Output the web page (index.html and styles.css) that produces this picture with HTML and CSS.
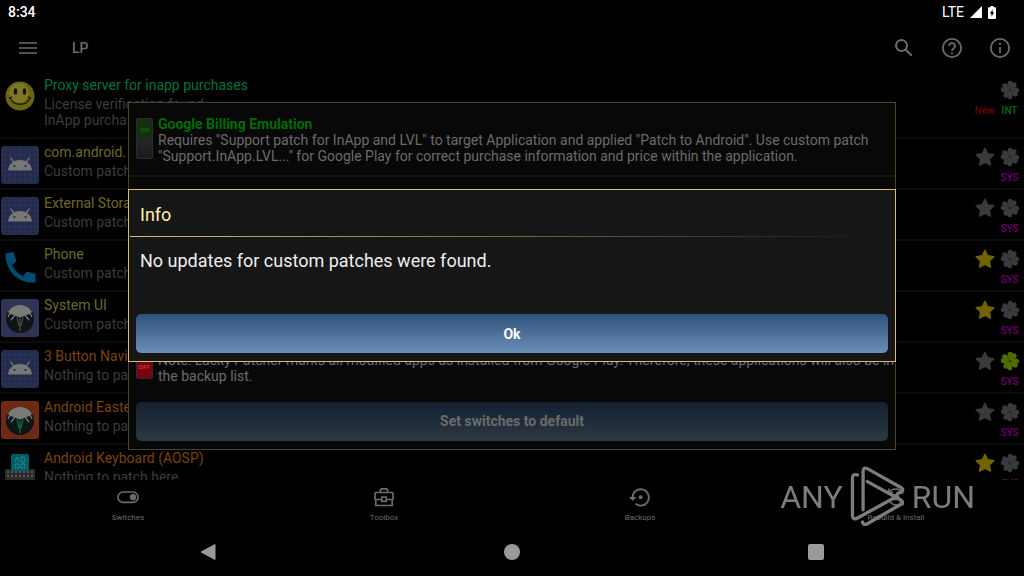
FILE: index.html
```
<!DOCTYPE html>
<html lang="en">
<head>
    <meta charset="UTF-8">
    <meta name="viewport" content="width=device-width, initial-scale=1.0">
    <title>LP</title>
    <link rel="stylesheet" href="styles.css">
</head>
<body>
    <!-- shared icons -->
    <svg class="defs" aria-hidden="true">
        <symbol id="star" viewBox="0 0 20 20">
            <path d="M10 1.2l2.7 5.6 6.1.9-4.4 4.3 1.1 6.2-5.5-2.9-5.5 2.9 1.1-6.2L1.2 7.7l6.1-.9z" stroke-width="1.4" stroke="currentColor" stroke-linejoin="round" fill="currentColor"/>
        </symbol>
        <symbol id="clover" viewBox="0 0 20 20">
            <g fill="currentColor" transform="rotate(20 10 10)">
                <path id="leaf" d="M10 9.700C8.300 8.200 5.200 6.800 5.400 3.500 5.600 1 8.700.2 10 2.300 11.300.2 14.400 1 14.600 3.500c.2 3.300-2.900 4.700-4.600 6.200z"/>
                <use href="#leaf" transform="rotate(90 10 10)"/>
                <use href="#leaf" transform="rotate(180 10 10)"/>
                <use href="#leaf" transform="rotate(270 10 10)"/>
            </g>
        </symbol>
        <symbol id="android" viewBox="0 0 38 38">
            <rect width="38" height="38" rx="3" fill="#222b4a"/>
            <path d="M4 0v38M9 0v38M14 0v38M19 0v38M24 0v38M29 0v38M34 0v38M0 4h38M0 9h38M0 14h38M0 19h38M0 24h38M0 29h38M0 34h38" stroke="#2c3556" stroke-width="1"/>
            <path d="M12.500 16L10 12M25.500 16l2.500-4" stroke="#777" stroke-width="1.4" fill="none" stroke-linecap="round"/>
            <path d="M7 24.5C7.600 18.500 12 14 19 14s11.400 4.500 12 10.500z" fill="#777"/>
            <circle cx="13.500" cy="20" r="1.1" fill="#222b4a"/>
            <circle cx="24.500" cy="20" r="1.1" fill="#222b4a"/>
        </symbol>
        <symbol id="umbrella" viewBox="0 0 38 38">
            <circle cx="19" cy="20" r="14" fill="#0d1517"/>
            <path d="M7 13C10 8 14 6 19 6s9 2 12 7c-2 2-4 3-6 3l-4 2h-4l-4-2c-2 0-4-1-6-3z" fill="#777b78"/>
            <path d="M9 14l-2 4M14 16l-4 5M29 14l2 4M24 16l4 5" stroke="#777b78" stroke-width="1.3"/>
            <path d="M19 18v14M16 18l2 9M22 18l-2 9" stroke="currentColor" stroke-width="1.4"/>
        </symbol>
    </svg>

    <div class="screen">
        <header class="status-bar">
            <span>8:34</span>
            <div class="status-icons">
                <span class="network">LTE</span>
                <svg width="12" height="12" viewBox="0 0 12 12"><path d="M12 0v12H0z" fill="#fff"/></svg>
                <svg width="8" height="13" viewBox="0 0 8 13"><path d="M2.500 0h3v1.300H7A1 1 0 0 1 8 2.300V12a1 1 0 0 1-1 1H1a1 1 0 0 1-1-1V2.300a1 1 0 0 1 1-1h1.500z" fill="#fff"/><path d="M4.600 3.200L2 7.700h1.500v3.100L6.100 6.300H4.600z" fill="#000"/></svg>
            </div>
        </header>

        <nav class="toolbar">
            <button class="icon-button" aria-label="Menu">
                <svg width="24" height="24" viewBox="0 0 24 24"><path d="M3 7h18M3 12h18M3 17h18" stroke="currentColor" stroke-width="1.7"/></svg>
            </button>
            <h1>LP</h1>
            <button class="icon-button" aria-label="Search">
                <svg width="24" height="24" viewBox="0 0 24 24" fill="none" stroke="currentColor" stroke-width="2"><circle cx="9.5" cy="9.5" r="5.5"/><path d="M13.800 13.800l6 6"/></svg>
            </button>
            <button class="icon-button" aria-label="Help">
                <svg width="24" height="24" viewBox="0 0 24 24" fill="none" stroke="currentColor" stroke-width="1.8"><circle cx="12" cy="12" r="9.1"/><path d="M9 10a3 3 0 1 1 4.800 2.300C12.600 13.200 12 13.700 12 15M12 16.200v2"/></svg>
            </button>
            <button class="icon-button" aria-label="Info">
                <svg width="24" height="24" viewBox="0 0 24 24" fill="none" stroke="currentColor" stroke-width="1.8"><circle cx="12" cy="12" r="9.1"/><path d="M12 11v6M12 7v2"/></svg>
            </button>
        </nav>

        <ul class="app-list">
            <li class="app">
                <svg class="app-icon" viewBox="0 0 38 38">
                    <circle cx="19" cy="17" r="14.5" fill="#6b6410"/>
                    <circle cx="18" cy="14" r="10" fill="#7d7722"/>
                    <ellipse cx="14.5" cy="12.5" rx="1.7" ry="3.3" fill="#111"/>
                    <ellipse cx="23.5" cy="12.5" rx="1.7" ry="3.3" fill="#111"/>
                    <path d="M9.500 18.500c1.500 9 17.500 9 19 0M8 19.500l3-1.500M30 19.500L27 18" stroke="#1c1a04" stroke-width="1.5" fill="none"/>
                </svg>
                <div class="app-text">
                    <h2 class="green">Proxy server for inapp purchases</h2>
                    <p>License verification found<br>InApp purchases found</p>
                </div>
                <div class="marks">
                    <span class="empty"></span>
                    <svg><use href="#clover"/></svg>
                    <span class="tag new">New</span>
                    <span class="tag int">INT</span>
                </div>
            </li>
            <li class="app">
                <svg class="app-icon"><use href="#android"/></svg>
                <div class="app-text">
                    <h2 class="yellow">com.android.</h2>
                    <p>Custom patch</p>
                </div>
                <div class="marks">
                    <svg><use href="#star"/></svg>
                    <svg><use href="#clover"/></svg>
                    <span class="tag sys">SYS</span>
                </div>
            </li>
            <li class="app">
                <svg class="app-icon"><use href="#android"/></svg>
                <div class="app-text">
                    <h2 class="yellow">External Storage</h2>
                    <p>Custom patch</p>
                </div>
                <div class="marks">
                    <svg><use href="#star"/></svg>
                    <svg><use href="#clover"/></svg>
                    <span class="tag sys">SYS</span>
                </div>
            </li>
            <li class="app">
                <svg class="app-icon" viewBox="0 0 38 38">
                    <path d="M4.500 5.500l8-1.500 3 9-4.500 4c2.500 5 6 8.500 11 11l4-4.500 8.500 2.500v8.500C18 36 4 23 4.500 5.500z" fill="#034b70"/>
                </svg>
                <div class="app-text">
                    <h2 class="yellow">Phone</h2>
                    <p>Custom patch</p>
                </div>
                <div class="marks">
                    <svg class="gold"><use href="#star"/></svg>
                    <svg><use href="#clover"/></svg>
                    <span class="tag sys">SYS</span>
                </div>
            </li>
            <li class="app">
                <svg class="app-icon gray-ribs" viewBox="0 0 38 38">
                    <rect width="38" height="38" rx="3" fill="#303354"/>
                    <use href="#umbrella"/>
                </svg>
                <div class="app-text">
                    <h2 class="yellow">System UI</h2>
                    <p>Custom patch</p>
                </div>
                <div class="marks">
                    <svg class="gold"><use href="#star"/></svg>
                    <svg><use href="#clover"/></svg>
                    <span class="tag sys">SYS</span>
                </div>
            </li>
            <li class="app">
                <svg class="app-icon"><use href="#android"/></svg>
                <div class="app-text">
                    <h2 class="orange">3 Button Navi</h2>
                    <p>Nothing to patch</p>
                </div>
                <div class="marks">
                    <svg><use href="#star"/></svg>
                    <svg class="lime"><use href="#clover"/></svg>
                    <span class="tag sys">SYS</span>
                </div>
            </li>
            <li class="app">
                <svg class="app-icon green-ribs" viewBox="0 0 38 38">
                    <rect width="38" height="38" rx="3" fill="#6e2a14"/>
                    <use href="#umbrella"/>
                </svg>
                <div class="app-text">
                    <h2 class="orange">Android Easter</h2>
                    <p>Nothing to patch</p>
                </div>
                <div class="marks">
                    <svg><use href="#star"/></svg>
                    <svg><use href="#clover"/></svg>
                    <span class="tag sys">SYS</span>
                </div>
            </li>
            <li class="app">
                <svg class="app-icon" viewBox="0 0 38 38">
                    <path d="M4 17h30v21H4z" fill="#2b2b2b"/>
                    <path d="M6 20h26M6 24h26" stroke="#565656" stroke-width="2" stroke-dasharray="2 2"/>
                    <rect x="10" y="2" width="18" height="17" rx="2" fill="#035c63"/>
                    <path d="M14 10l2-5 2 5M20 5h4v5h-4zM14 12h4v4h-4zM20 12h4v4h-4z" stroke="#23868a" fill="none"/>
                </svg>
                <div class="app-text">
                    <h2 class="orange">Android Keyboard (AOSP)</h2>
                    <p>Nothing to patch here</p>
                </div>
                <div class="marks">
                    <svg class="gold"><use href="#star"/></svg>
                    <svg><use href="#clover"/></svg>
                    <span class="tag sys">SYS</span>
                </div>
            </li>
        </ul>

        <nav class="tabs">
            <button class="tab">
                <svg width="24" height="24" viewBox="0 0 24 24" fill="none" stroke="currentColor" stroke-width="1.7"><rect x="2" y="7" width="20" height="10.4" rx="5.2"/><circle cx="17" cy="12.2" r="2.3" fill="currentColor"/></svg>
                Switches
            </button>
            <button class="tab">
                <svg width="24" height="24" viewBox="0 0 24 24" fill="none" stroke="currentColor" stroke-width="1.7"><path d="M8.500 7.500V4.800q0-1 1-1h5q1 0 1 1v2.700M3 15V8.500q0-1 1-1h16q1 0 1 1V15M3 14.500h6.500M14.500 14.500H21M3.800 14.500V20.500h16.400v-6M9.800 12h4.400v4.300H9.800z"/></svg>
                Toolbox
            </button>
            <button class="tab">
                <svg width="24" height="24" viewBox="0 0 24 24" fill="none" stroke="currentColor" stroke-width="1.8"><path d="M4.500 12.500a8.200 8.200 0 1 1 3 6.300"/><path d="M1 12l3.700 4 3.700-4z" fill="currentColor" stroke="none"/><circle cx="12.700" cy="12.2" r="2" fill="currentColor" stroke="none"/></svg>
                Backups
            </button>
            <button class="tab">
                <svg width="24" height="24" viewBox="0 0 24 24" fill="none" stroke="currentColor" stroke-width="1.7"><path d="M19 9a8 8 0 0 0-14-1.500M5 3.500v4h4M5 15a8 8 0 0 0 14 1.500M19 20.500v-4h-4"/><circle cx="12" cy="12" r="2.5"/></svg>
                Rebuild &amp; Install
            </button>
        </nav>

        <nav class="system-nav">
            <button aria-label="Back"><svg width="16" height="18" viewBox="0 0 16 18"><path d="M1 9L15 1.500v15z" fill="currentColor" stroke="currentColor" stroke-linejoin="round"/></svg></button>
            <button aria-label="Home"><svg width="16" height="18" viewBox="0 0 16 18"><circle cx="8" cy="9" r="8" fill="currentColor"/></svg></button>
            <button aria-label="Recents"><svg width="16" height="18" viewBox="0 0 16 18"><rect y="1" width="16" height="16" rx="2" fill="currentColor"/></svg></button>
        </nav>
    </div>

    <div class="overlay">
        <section class="dialog switches">
            <div class="switch-list">
                <div class="switch-item">
                    <input type="checkbox" id="billing" class="toggle" checked>
                    <label for="billing"><b>Google Billing Emulation</b><br>Requires "Support patch for InApp and LVL" to target Application and applied "Patch to Android". Use custom patch "Support.InApp.LVL..." for Google Play for correct purchase information and price within the application.</label>
                </div>
                <div class="switch-item">
                    <input type="checkbox" id="backup" class="toggle">
                    <label for="backup"><br>Note: Lucky Patcher marks all modified apps as installed from Google Play. Therefore, these applications will also be in the backup list.</label>
                </div>
            </div>
            <button class="wide-button">Set switches to default</button>
        </section>
    </div>

    <div class="overlay">
        <section class="dialog info" role="dialog" aria-labelledby="info-title">
            <h2 id="info-title">Info</h2>
            <p>No updates for custom patches were found.</p>
            <button class="wide-button">Ok</button>
        </section>
    </div>

    <div class="watermark">
        <span>ANY</span>
        <svg width="55" height="63" viewBox="250 30 165 190" fill="none" stroke="currentColor" stroke-width="10" stroke-linecap="round">
            <path d="M289 165V50q0-15 13-9l101 57q12 7 0 14l-10 4"/>
            <path d="M302 80l100 55q12 7 0 14L302 207q-12 6-15-5"/>
            <path d="M272 60q-15-5-15 10v112q0 14 13 9l120-66"/>
        </svg>
        <span>RUN</span>
    </div>
</body>
</html>
```
FILE: styles.css
```
* {
    box-sizing: border-box;
}

body {
    margin: 0;
    background-color: #000;
    color: #3c3c3c;
    font-family: Roboto, sans-serif;
    font-size: 14px;
    line-height: 16px;
    overflow: hidden;
}

h1, h2, p, ul {
    margin: 0;
    padding: 0;
    font-weight: 400;
}

button {
    border: 0;
    padding: 0;
    background: none;
    color: inherit;
    font: inherit;
}

svg {
    display: block;
}

.defs {
    position: absolute;
    width: 0;
    height: 0;
}

.screen {
    display: flex;
    flex-direction: column;
    height: 100vh;
}

/* status bar */
.status-bar {
    display: flex;
    justify-content: space-between;
    align-items: center;
    height: 24px;
    padding: 0 28px 0 8px;
    color: #fff;
    font-weight: 500;
}

.status-icons {
    display: flex;
    align-items: center;
    gap: 6px;
}

.network {
    font-weight: 400;
}

/* toolbar */
.toolbar {
    display: flex;
    align-items: center;
    gap: 24px;
    height: 48px;
    padding: 0 12px 0 16px;
    color: #6b6b6b;
}

.toolbar h1 {
    flex: 1;
    padding-left: 8px;
    font-size: 14px;
    font-weight: 500;
}

/* application list */
.app-list {
    flex: 1;
    min-height: 0;
    overflow: hidden;
    list-style: none;
}

.app {
    display: flex;
    align-items: flex-start;
    gap: 5px;
    padding: 5px 2px 6px 1px;
    border-bottom: 2px solid #0c0c0c;
}

.app-icon {
    width: 38px;
    height: 38px;
    margin: 2px 0 -8px;
}

.app-text {
    flex: 1;
    padding-bottom: 3px;
}

.app h2 {
    margin-bottom: 3px;
    font-size: 14px;
}

.green { color: #007437; }
.yellow { color: #6c6a25; }
.orange { color: #7a430c; }

.marks {
    display: grid;
    grid-template-columns: 25px 25px;
    justify-items: center;
    row-gap: 5px;
    margin-bottom: -6px;
    padding-top: 3px;
}

.marks svg,
.empty {
    width: 20px;
    height: 20px;
    color: #3a3a3a;
}

.marks .gold { color: #716300; }
.marks .lime { color: #526b00; }

.tag {
    grid-column: 2;
    font-size: 10px;
    font-weight: 500;
    line-height: 12px;
}

.new {
    grid-column: 1;
    color: #6c0000;
}

.int { color: #006c10; }
.sys { color: #6c006c; }

.gray-ribs { color: #4a4038; }
.green-ribs { color: #12603a; }

/* bottom tabs */
.tabs {
    display: grid;
    grid-template-columns: repeat(4, 1fr);
    height: 48px;
    color: #6b6b6b;
}

.tab {
    display: flex;
    flex-direction: column;
    align-items: center;
    gap: 3px;
    padding-top: 5px;
    font-size: 8px;
    line-height: 12px;
}

.system-nav {
    display: flex;
    justify-content: space-between;
    align-items: center;
    height: 48px;
    padding: 0 19.5%;
    color: #999;
}

/* dialogs */
.overlay {
    position: fixed;
    inset: 24px 0 49px;
    display: flex;
    justify-content: center;
    align-items: center;
}

.dialog {
    width: 75%;
    padding: 7px 7px 8px;
    border: 1px solid #d2bf74;
    background-color: #161616;
}

.switches {
    border-color: #48442a;
    background-color: #080808;
    color: #6b6b6b;
}

.switch-list {
    display: flex;
    flex-direction: column;
    justify-content: space-between;
    min-height: 292px;
    padding: 6px 0 18px;
}

.switch-item {
    display: flex;
    gap: 5px;
    margin: 0 -7px;
    padding: 0 0 0 7px;
}

.switch-item:first-child {
    padding-bottom: 11px;
    border-bottom: 2px solid #141414;
}

.switch-item b {
    color: #006c00;
    font-weight: 700;
}

.toggle {
    appearance: none;
    flex: none;
    width: 17px;
    height: 41px;
    margin: 2px 0 0;
    border: 1px solid #2c2c2c;
    border-radius: 2px;
    background: linear-gradient(#262626 50%, #7a0010 50%);
    color: #b04040;
    font-size: 6px;
    font-weight: 700;
    line-height: 16px;
    text-align: center;
}

.toggle::before {
    content: "OFF";
    display: block;
    padding-top: 20px;
}

.toggle:checked {
    background: linear-gradient(#12300f 46%, #262626 50%, #1a1a1a);
    color: #0a6a0a;
}

.toggle:checked::before {
    content: "ON";
    padding-top: 3px;
}

.wide-button {
    display: block;
    width: 100%;
    height: 39px;
    border-radius: 5px;
    background: linear-gradient(#2d5179, #6c8fb8);
    color: #fff;
    font-weight: 700;
}

.switches .wide-button {
    background: linear-gradient(#132130, #2d3841);
    color: #6b6b6b;
}

.info {
    color: #eee;
    font-size: 18px;
    line-height: 24px;
}

.info h2 {
    margin: 0 -6px;
    padding: 6px 10px 9px;
    border-bottom: 1px solid;
    border-image: linear-gradient(to right, #d2bf74, #5c553c 60%, #161616 97%) 1;
    color: #fff0a8;
    font-size: 18px;
}

.info p {
    padding: 12px 4px 41px;
}

.info .wide-button {
    font-size: 14px;
}

/* watermark */
.watermark {
    position: fixed;
    right: 49px;
    bottom: 48px;
    display: flex;
    align-items: center;
    gap: 7px;
    color: #7c7c7c;
    font-size: 32px;
    line-height: 40px;
    pointer-events: none;
}
```
